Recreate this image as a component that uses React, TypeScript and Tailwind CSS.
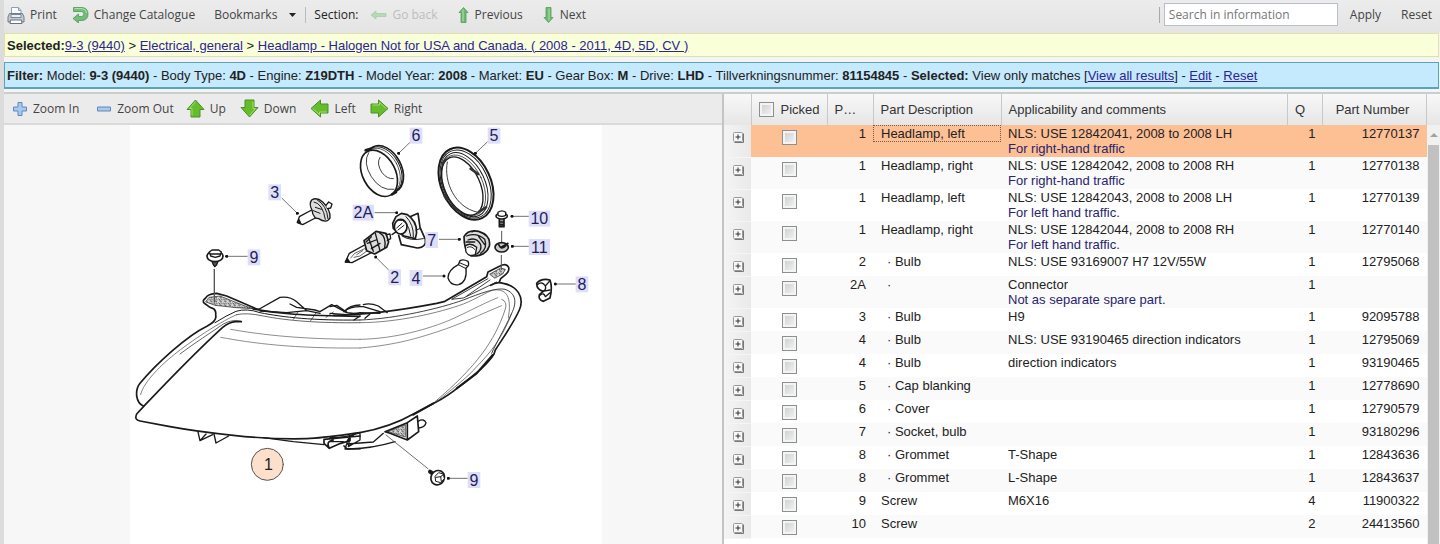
import { Fragment, type ReactNode } from "react";

type Part = {
  pos: string;
  description: string;
  comment?: string;
  note?: string;
  qty: string;
  number?: string;
  child?: boolean;
};

const parts: Part[] = [
  { pos: "1", description: "Headlamp, left", comment: "NLS: USE 12842041, 2008 to 2008 LH", note: "For right-hand traffic", qty: "1", number: "12770137" },
  { pos: "1", description: "Headlamp, right", comment: "NLS: USE 12842042, 2008 to 2008 RH", note: "For right-hand traffic", qty: "1", number: "12770138" },
  { pos: "1", description: "Headlamp, left", comment: "NLS: USE 12842043, 2008 to 2008 LH", note: "For left hand traffic.", qty: "1", number: "12770139" },
  { pos: "1", description: "Headlamp, right", comment: "NLS: USE 12842044, 2008 to 2008 RH", note: "For left hand traffic.", qty: "1", number: "12770140" },
  { pos: "2", description: "Bulb", comment: "NLS: USE 93169007 H7 12V/55W", qty: "1", number: "12795068", child: true },
  { pos: "2A", description: "", comment: "Connector", note: "Not as separate spare part.", qty: "1", child: true },
  { pos: "3", description: "Bulb", comment: "H9", qty: "1", number: "92095788", child: true },
  { pos: "4", description: "Bulb", comment: "NLS: USE 93190465 direction indicators", qty: "1", number: "12795069", child: true },
  { pos: "4", description: "Bulb", comment: "direction indicators", qty: "1", number: "93190465", child: true },
  { pos: "5", description: "Cap blanking", qty: "1", number: "12778690", child: true },
  { pos: "6", description: "Cover", qty: "1", number: "12790579", child: true },
  { pos: "7", description: "Socket, bulb", qty: "1", number: "93180296", child: true },
  { pos: "8", description: "Grommet", comment: "T-Shape", qty: "1", number: "12843636", child: true },
  { pos: "8", description: "Grommet", comment: "L-Shape", qty: "1", number: "12843637", child: true },
  { pos: "9", description: "Screw", comment: "M6X16", qty: "4", number: "11900322" },
  { pos: "10", description: "Screw", qty: "2", number: "24413560" },
];

const filters = [
  ["Model", "9-3 (9440)"],
  ["Body Type", "4D"],
  ["Engine", "Z19DTH"],
  ["Model Year", "2008"],
  ["Market", "EU"],
  ["Gear Box", "M"],
  ["Drive", "LHD"],
  ["Tillverkningsnummer", "81154845"],
];

export default function App() {
  return (
    <div className="flex h-screen flex-col overflow-hidden border-l-4 border-[#dcdcdc] bg-[#f4f4f4] font-['Liberation_Sans',Arial,sans-serif] text-[13px] leading-[15px] text-[#222]">
      <MainToolbar />

      {/* Breadcrumb */}
      <nav className="mr-px flex h-6 shrink-0 items-center border border-[#e3dfae] bg-[#f9ffd9] px-0.5 whitespace-pre">
        <b>Selected:</b>
        <Link>9-3 (9440)</Link>
        {" > "}
        <Link>Electrical, general</Link>
        {" > "}
        <Link>Headlamp - Halogen Not for USA and Canada. ( 2008 - 2011, 4D, 5D, CV )</Link>
      </nav>

      {/* Filter */}
      <div className="mt-[5px] mr-px flex h-[27px] shrink-0 items-center border border-b-2 border-[#5ba4b8] bg-[#c5e9fd] px-0.5 whitespace-pre">
        <b>Filter: </b>
        {filters.map(([label, value]) => (
          <Fragment key={label}>
            {label}: <b>{value}</b>
            {" - "}
          </Fragment>
        ))}
        <b>Selected:</b>
        {" View only matches ["}
        <Link>View all results</Link>
        {"] - "}
        <Link>Edit</Link>
        {" - "}
        <Link>Reset</Link>
      </div>

      <div className="mt-[3px] flex min-h-0 flex-1 border-t-2 border-[#c9cfca]">
        <main className="flex min-w-0 flex-1 flex-col">
          <DiagramToolbar />
          <div className="flex min-h-0 flex-1 justify-center bg-[#f7f7f7] pl-1.5">
            <Diagram />
          </div>
        </main>
        <PartsTable />
      </div>
    </div>
  );
}

function Link({ children }: { children: ReactNode }) {
  return (
    <a href="#" className="text-[#2b2594] underline">
      {children}
    </a>
  );
}

function ToolButton({ icon, children, disabled }: { icon?: ReactNode; children: ReactNode; disabled?: boolean }) {
  return (
    <button type="button" disabled={disabled} className="flex items-center gap-[5px] whitespace-nowrap disabled:text-[#bdbdbd]">
      {icon}
      {children}
    </button>
  );
}

function MainToolbar() {
  return (
    <header className="flex h-[33px] shrink-0 items-center bg-linear-to-b from-[#ececec] to-[#e4e4e4] pr-2 pb-1 pl-[3px] font-['Open_Sans',Tahoma,sans-serif] text-xs text-[#444]">
      <div className="flex flex-1 items-center gap-[19px]">
        <div className="flex items-center gap-[15px]">
          <ToolButton icon={<PrintIcon />}>Print</ToolButton>
          <ToolButton icon={<SwapIcon />}>Change Catalogue</ToolButton>
        </div>
        <button type="button" className="flex items-center gap-3">
          Bookmarks
          <svg className="h-1 w-[7px]" viewBox="0 0 7 4">
            <path d="M0 0h7L3.500 4z" fill="#222" />
          </svg>
        </button>
        <div className="-ml-2.5 flex items-center gap-3">
          <span className="h-4 w-px bg-[#bbb]" />
          <span className="-ml-1 text-[#222]">Section:</span>
          <ToolButton disabled icon={<BackIcon />}>Go back</ToolButton>
        </div>
        <ToolButton icon={<StepIcon />}>Previous</ToolButton>
        <ToolButton icon={<StepIcon className="rotate-180" />}>Next</ToolButton>
      </div>
      <form className="flex items-center">
        <span className="mr-1 h-4 w-px bg-[#aaa]" />
        <input
          type="text"
          aria-label="Search in information"
          placeholder="Search in information"
          className="h-[23px] w-[174px] border border-[#b9bfc9] bg-white px-1 placeholder:text-[#777]"
        />
        <button type="button" className="ml-3">Apply</button>
        <button type="reset" className="ml-5">Reset</button>
      </form>
    </header>
  );
}

function DiagramToolbar() {
  return (
    <div className="flex h-[31px] shrink-0 items-center gap-3 border-b-2 border-[#dadada] bg-[#ebebeb] pl-2 font-['Open_Sans',Tahoma,sans-serif] text-xs text-[#444]">
      <div className="flex items-center gap-[17px]">
        <ToolButton icon={<PlusIcon />}>Zoom In</ToolButton>
        <ToolButton icon={<MinusIcon />}>Zoom Out</ToolButton>
      </div>
      <div className="flex items-center gap-3.5">
        <ToolButton icon={<ArrowIcon />}>Up</ToolButton>
        <ToolButton icon={<ArrowIcon className="rotate-180" />}>Down</ToolButton>
        <ToolButton icon={<ArrowIcon className="-rotate-90" />}>Left</ToolButton>
        <ToolButton icon={<ArrowIcon className="rotate-90" />}>Right</ToolButton>
      </div>
    </div>
  );
}

function PartsTable() {
  return (
    <section className="flex w-1/2 border-l-2 border-[#c4c4c4] bg-white">
      <div className="min-w-0 flex-1 overflow-hidden">
        <table className="w-full table-fixed border-collapse">
          <colgroup>
            <col className="w-[27px]" />
            <col className="w-[76px]" />
            <col className="w-[46px]" />
            <col className="w-32" />
            <col />
            <col className="w-[35px]" />
            <col className="w-[104px]" />
          </colgroup>
          <thead>
            <tr className="h-[31px] bg-linear-to-b from-[#f8f8f8] to-[#e6e6e6] text-left text-[#333] *:border-r *:border-[#c8c8c8] *:font-normal">
              <th />
              <th className="pl-[7px]">
                <label className="flex items-center gap-[7px]">
                  <Check />
                  Picked
                </label>
              </th>
              <th className="pl-[7px]">P…</th>
              <th className="pl-[7px]">Part Description</th>
              <th className="pl-[7px]">Applicability and comments</th>
              <th className="pl-[7px]">Q</th>
              <th className="pr-1 text-center">Part Number</th>
            </tr>
          </thead>
          <tbody>
            {parts.map((part, index) => (
              <PartRow key={index} part={part} index={index} />
            ))}
          </tbody>
        </table>
      </div>
      <Scrollbar />
    </section>
  );
}

function PartRow({ part, index }: { part: Part; index: number }) {
  const selected = index === 0;
  const background = selected ? "bg-[#fdbf94]" : index % 2 ? "bg-[#fafafa]" : "bg-white";

  return (
    <tr className={`align-top ${part.note ? "h-8" : "h-[23px]"} ${background}`}>
      <td className="border-b border-[#f5f5f5] bg-linear-to-r from-[#f4f4f4] to-[#e9e9e9] pt-[7px] pl-[9px]">
        <button type="button" aria-label="Expand row" className="block">
          <ExpandIcon />
        </button>
      </td>
      <td className="pt-[5px] pl-[31px]">
        <Check label={`Pick ${part.number ?? part.pos}`} />
      </td>
      <td className="pt-px pr-[7px] text-right">{part.pos}</td>
      <td>
        <div className={`h-[17px] border pl-[7px] ${selected ? "border-dotted border-[#7a5a45]" : "border-transparent"}`}>
          {part.child ? <span className="pl-1.5">· {part.description}</span> : part.description}
        </div>
      </td>
      <td className="pt-px pl-[7px] whitespace-nowrap">
        {part.comment}
        {part.note && <div className="text-[#28246e]">{part.note}</div>}
      </td>
      <td className="pt-px pr-[7px] text-right">{part.qty}</td>
      <td className="pt-px pr-[7px] text-right">{part.number}</td>
    </tr>
  );
}

function Check({ label }: { label?: string }) {
  return (
    <input
      type="checkbox"
      aria-label={label}
      className="block size-[15px] appearance-none border border-[#8e8f8f] bg-linear-to-br from-[#c9cccf] to-[#f6f6f6] shadow-[inset_0_0_0_2px_#f4f4f4]"
    />
  );
}

function Scrollbar() {
  return (
    <div className="flex w-[13px] flex-col items-center bg-[#f1f1f1]">
      <div className="h-[31px] w-full bg-linear-to-b from-[#f8f8f8] to-[#e6e6e6]" />
      <svg className="my-2 h-1 w-2 shrink-0" viewBox="0 0 8 4">
        <path d="M0 4h8L4 0z" fill="#a3a3a3" />
      </svg>
      <div className="w-[11px] flex-1 bg-[#c1c1c1]" />
    </div>
  );
}

/* Icons */

function ExpandIcon() {
  return (
    <svg className="size-[11px]" viewBox="0 0 11 11">
      <rect x=".5" y=".5" width="9" height="9" rx="1" fill="#f7f7f7" stroke="#999" />
      <path d="M10.500 1.500v9h-9" fill="none" stroke="#777" />
      <path d="M5 2.500v5M2.500 5h5" stroke="#333" />
    </svg>
  );
}

function PrintIcon() {
  return (
    <svg className="size-[18px]" viewBox="0 0 18 18">
      <path d="M4.500 8V1.500h7l2.500 3V8" fill="#fafcff" stroke="#8ba0bd" />
      <path d="M11.500 1.500v3H14" fill="none" stroke="#8ba0bd" />
      <path d="M2.500 7.500h13L17 11v5H1v-5z" fill="#c6cad1" stroke="#747c88" />
      <path d="M4 8.500h10v3H4z" fill="#e9f1fb" stroke="#7b8798" />
      <path d="M3.500 14h11l.5 3.500H3z" fill="#fff" stroke="#68717d" />
    </svg>
  );
}

function SwapIcon() {
  return (
    <svg className="size-[17px]" viewBox="0 0 17 17">
      <path d="M1.500 1.500H10Q16 2 16 8t-6 6.500H6.500V17L1 12.500 6.500 8v2.500H9.500Q12 10 12 8T9.500 5.500h-8z" fill="#72bd78" stroke="#4b9a56" strokeWidth=".8" />
      <path d="M2.500 2.600H10Q14 3 14.800 7" fill="none" stroke="#b5e0b5" />
    </svg>
  );
}

function BackIcon() {
  return (
    <svg className="h-[10px] w-[17px]" viewBox="0 0 17 10">
      <path d="M1 5l5-4v2.500h10v3H6V9z" fill="#b7d9b5" stroke="#a2c9a2" strokeWidth=".7" />
    </svg>
  );
}

function StepIcon({ className = "" }: { className?: string }) {
  return (
    <svg className={`h-4 w-[13px] ${className}`} viewBox="0 0 13 16">
      <path d="M6.500.500l4.500 5H9v10H4v-10H2z" fill="#6fb873" stroke="#559a5a" strokeWidth=".8" />
      <path d="M6 2.500v12" stroke="#b4dfb0" />
    </svg>
  );
}

function PlusIcon() {
  return (
    <svg className="size-4" viewBox="0 0 16 16">
      <path d="M6 1.500h4V6h4.500v4H10v4.500H6V10H1.500V6H6z" fill="#a8c9ec" stroke="#5d88be" />
    </svg>
  );
}

function MinusIcon() {
  return (
    <svg className="size-4" viewBox="0 0 16 16">
      <path d="M1.500 6h13v4h-13z" fill="#a8c9ec" stroke="#5d88be" />
    </svg>
  );
}

function ArrowIcon({ className = "" }: { className?: string }) {
  return (
    <svg className={`size-[19px] ${className}`} viewBox="0 0 19 19">
      <path d="M9.500 1l8.500 9.500h-4V18H5v-7.500H1z" fill="#66bd2c" stroke="#4b8f28" />
      <path d="M9.500 2.700L3.500 9.500H6v7" fill="none" stroke="#a4de72" />
    </svg>
  );
}

/* Exploded view of the headlamp, drawn at three units per pixel */

const callouts = [
  { label: "6", x: 1248, y: 407, line: "M1231 426L1196 460" },
  { label: "5", x: 1482, y: 407, line: "M1462 426L1426 460" },
  { label: "3", x: 824, y: 577, line: "M846 595L892 640" },
  { label: "2A", x: 1090, y: 638, line: "M1125 638H1190" },
  { label: "7", x: 1295, y: 720, line: "M1318 718H1378" },
  { label: "10", x: 1618, y: 656, line: "M1588 649H1536" },
  { label: "11", x: 1618, y: 741, line: "M1588 739H1537" },
  { label: "2", x: 1184, y: 832, line: "M1166 810L1127 771" },
  { label: "4", x: 1248, y: 834, line: "M1270 828H1332" },
  { label: "8", x: 1746, y: 853, line: "M1727 852H1666" },
  { label: "9", x: 762, y: 772, line: "M742 769H680" },
  { label: "9", x: 1422, y: 1440, line: "M1402 1435H1345" },
];

function Diagram() {
  return (
    <svg className="h-[419px] w-[472px] shrink-0 bg-white" viewBox="390 375 1416 1257" fill="none" stroke="#1a1a1a" strokeWidth="4" strokeLinejoin="round" strokeLinecap="round">
      <defs>
        <marker id="dot" viewBox="0 0 10 10" refX="5" refY="5" markerWidth="10" markerHeight="10" markerUnits="userSpaceOnUse">
          <circle cx="5" cy="5" r="4.500" fill="#111" stroke="none" />
        </marker>
        <pattern id="speckle" width="14" height="12" patternUnits="userSpaceOnUse">
          <rect width="14" height="12" fill="#ddd" stroke="none" />
          <path d="M2 3l4 3M9 2l3 4M5 9l5 1" stroke="#333" strokeWidth="2.500" />
        </pattern>
      </defs>

      <Housing />
      <Bulbs />
      <Rings />
      <Hardware />

      {callouts.map((c, i) => (
        <g key={i}>
          <path d={c.line} stroke="#555" strokeWidth="2.500" markerEnd="url(#dot)" />
          <rect x={c.x - (c.label.length > 1 ? 32 : 19)} y={c.y - 24} width={c.label.length > 1 ? 64 : 38} height="48" fill="#dedef8" stroke="none" />
          <text x={c.x} y={c.y + 17} textAnchor="middle" fontSize="48" fill="#211d5c" stroke="none">
            {c.label}
          </text>
        </g>
      ))}

      <circle cx="802" cy="1393" r="48" fill="#fde0cb" stroke="#555" strokeWidth="3" />
      <text x="805" y="1410" textAnchor="middle" fontSize="48" fill="#222" stroke="none">
        1
      </text>
    </svg>
  );
}

function Housing() {
  return (
    <>
      <g transform="translate(360 810)">
        <path d="M410 117L320 78 290 70Q262 72 257 84 246 92 252 99L270 112Q290 116 287 135 292 152 262 168C200 198 110 280 60 340Q48 355 50 378 54 402 70 408" strokeWidth="5" />
        <path d="M268 82L300 78 375 108 400 116 350 113 285 106 258 96Z" fill="url(#speckle)" strokeWidth="2" />
        <path d="M285 158Q320 136 348 124 380 114 420 128C490 142 580 152 720 150" strokeWidth="3" />
        <path d="M350 134C290 160 190 230 155 260 100 305 66 350 62 374 62 392 76 404M340 127C270 160 180 225 148 252 95 298 60 345 56 374 56 392 72 406" strokeWidth="2" stroke="#444" />
        <path d="M350 134Q380 127 430 138C500 152 600 160 720 158" strokeWidth="2" />
        <path d="M364 155H347C330 156 318 164 308 172 250 225 170 305 76 404L50 432Q42 450 60 453L150 470C210 481 270 489 340 496 430 506 480 508 560 506 610 504 660 496 720 488" strokeWidth="5" />
        <path d="M364 154Q340 146 310 162C270 190 225 218 180 252" strokeWidth="2" />
        <path d="M332 178C400 190 520 208 720 208M302 202C400 220 520 236 720 234" strokeWidth="2" stroke="#555" />
        {/* Rear reflector shapes */}
        <path d="M400 118L418 117 480 82Q510 78 530 95L558 120M510 102L530 112 585 120 600 125 635 104 680 128M672 125Q690 105 720 105M420 123L500 128 560 122 600 130" />
        <path d="M400 117C480 132 540 137 720 139" strokeWidth="5" />
        <path d="M535 124L520 148M590 126L572 152M640 126L618 142" strokeWidth="2" />
        {/* Lower brackets */}
        <path d="M234 486L240 512 278 494M282 492L288 519 326 498M240 512L258 492M430 503L520 515 612 524" />
        <path d="M612 508V520L628 535 662 520 690 512V500M612 508L720 498M628 535Q616 514 640 510M672 528L682 537 720 536M682 520Q680 505 700 494" strokeWidth="5" />
      </g>
      <g transform="translate(990 780)">
        <path d="M90 518C160 505 205 488 250 462L320 425C350 410 365 398 385 382 435 345 478 305 492 282L496 270C525 225 550 190 568 150 585 110 560 78 520 70Q500 64 482 76" strokeWidth="5" />
        <path d="M10 166C90 165 200 153 320 130L345 124 470 50 474 36 510 18Q528 8 536 22 539 34 524 46L512 56 508 66" strokeWidth="5" />
        <path d="M90 180C200 176 330 145 400 120 450 100 500 82 525 88 560 100 560 130 545 160 520 215 500 245 485 280" strokeWidth="2.500" />
        <path d="M90 188C200 188 330 158 400 132 440 116 470 96 490 90 530 86 540 110 538 150L535 174" strokeWidth="2" stroke="#444" />
        <path d="M480 42L512 24 526 28 518 42 495 54Z" fill="url(#speckle)" strokeWidth="2" />
        <path d="M474 56L365 118 400 114 500 66M410 108L480 60" strokeWidth="2.500" />
        <path d="M90 238C200 236 300 205 360 180 410 158 450 135 503 113M90 264C200 255 270 232 320 216 400 190 450 163 515 137" strokeWidth="2" stroke="#555" />
        <path d="M515 118Q534 124 525 150C495 240 440 320 315 425M545 160C520 230 480 280 440 320 420 345 370 385 320 425" strokeWidth="2" stroke="#444" />
        <path d="M250 464L310 430M380 385L440 340 488 285" strokeWidth="6" />
        <path d="M0 140L20 136 52 158 85 162M42 155Q60 138 100 140L150 155M100 134Q120 128 145 138L172 158M0 160L50 164 90 158 150 160M90 168L72 180M120 162L105 175" />
        <path d="M0 533C40 533 65 528 90 518M0 545H40M60 528L55 560 90 540V522M45 567Q120 568 195 545M45 567L50 552 130 546 160 520" />
        <path d="M165 515L232 488 262 468 266 515 232 540 180 520ZM232 490V540" fill="#fff" strokeWidth="5" />
        <path d="M175 514L226 494V530Z" fill="url(#speckle)" strokeWidth="2" />
        <path d="M264 484Q282 474 288 488 286 502 266 504" />
        <path d="M168 525L294 626" stroke="#555" strokeWidth="2.500" />
      </g>
    </>
  );
}

function Bulbs() {
  return (
    <>
      {/* 3 */}
      <g transform="translate(390 360)">
        <path d="M545 270L508 290 502 308 518 314 556 294" />
        <path d="M502 306L508 300 512 311Z" fill="#111" />
        <path d="M545 240Q560 230 578 246 602 268 600 294 590 312 566 296L556 294Q546 282 546 270 536 252 545 240Z" fill="#ddd" />
        <path d="M552 246Q578 250 586 298M562 240Q590 256 594 296M556 262L574 268M550 272L570 280" strokeWidth="3" />
        <path d="M588 256L596 246 606 252 602 264 592 266" fill="#fff" />
      </g>
      <g transform="translate(990 360)">
        {/* 2 */}
        <path d="M120 366L58 400 46 426 66 428 128 396Z" fill="#fff" />
        <path d="M62 414L74 400 104 386 112 392 90 408 72 412M80 404L98 392" strokeWidth="2" />
        <path d="M46 426L52 416 58 425Z" fill="#111" />
        <path d="M102 362L138 334 168 340 176 366 170 382 134 402 110 392Z" fill="#ddd" strokeWidth="5" />
        <path d="M116 354L130 394M136 340L150 392M148 338Q170 350 164 384M112 370L138 360M124 386L150 370M108 366L124 350" strokeWidth="4" />
        <path d="M168 344L180 342 182 356 172 362M186 344L212 326" />
        {/* 2A */}
        <path d="M240 290L264 280 270 322 286 358Q290 382 262 384L214 374 206 346" fill="#fff" strokeWidth="5" />
        <path d="M214 280L232 284 242 292Q268 318 256 356L222 348 190 326 188 310 198 290Z" fill="#eee" strokeWidth="5" />
        <ellipse cx="212" cy="320" rx="19" ry="22" fill="#fff" strokeWidth="5" />
        <path d="M206 300Q234 296 242 348M228 290Q252 314 250 350M204 330L222 316M200 324L216 310M258 330L270 326M216 348Q240 364 280 356" strokeWidth="3" />
        {/* 4 */}
        <path d="M385 434Q354 450 354 474 362 498 386 494 412 486 408 444 420 436 414 424 400 416 390 422Z" fill="#fff" />
        <path d="M385 434L408 446M388 428L412 438" strokeWidth="3" />
        {/* 7 */}
        <path d="M402 350Q414 328 446 334 484 346 478 378 468 410 424 408 402 396 402 350Z" fill="#ddd" strokeWidth="5" />
        <path d="M410 348Q440 336 464 358 474 384 452 400M414 360Q440 350 452 374 456 392 440 402M408 366H434M446 350L464 374M426 336L434 332" strokeWidth="4" />
        <path d="M406 378Q420 366 440 382L436 404Q418 412 408 396Z" fill="#fff" />
        <path d="M412 382Q424 376 434 388" strokeWidth="3" />
      </g>
    </>
  );
}

function Rings() {
  return (
    <g transform="translate(990 360)">
      {/* 6 */}
      <ellipse cx="164" cy="147" rx="50" ry="75" transform="rotate(-28 164 147)" fill="#fff" strokeWidth="5" />
      <ellipse cx="160" cy="150" rx="50" ry="74" transform="rotate(-28 160 150)" strokeWidth="3" />
      <ellipse cx="156" cy="153" rx="49" ry="73" transform="rotate(-28 156 153)" strokeWidth="2" />
      <ellipse cx="147" cy="160" rx="49" ry="74" transform="rotate(-28 147 160)" fill="#fff" strokeWidth="5" />
      <path d="M116 98Q98 128 124 170 152 214 192 208M150 112Q138 130 156 158 172 178 190 176" strokeWidth="2.500" />
      <path d="M107 91L122 86M186 223L198 216" strokeWidth="8" />
      {/* 5 */}
      <ellipse cx="408" cy="191" rx="74" ry="114" transform="rotate(-25 408 191)" fill="#fff" strokeWidth="6" />
      <ellipse cx="407" cy="192" rx="68" ry="108" transform="rotate(-25 407 192)" strokeWidth="3" />
      <ellipse cx="404" cy="194" rx="61" ry="102" transform="rotate(-25 404 194)" strokeWidth="3" />
      <ellipse cx="401" cy="196" rx="57" ry="97" transform="rotate(-25 401 196)" strokeWidth="2" />
      <ellipse cx="397" cy="198" rx="53" ry="93" transform="rotate(-25 397 198)" fill="#fff" />
      <path d="M352 126C340 186 376 262 440 276" strokeWidth="2.500" />
      <path d="M338 130L346 120M422 146L444 162M446 276L468 262M344 228L350 238M370 260L380 268" strokeWidth="8" stroke="#333" />
    </g>
  );
}

function Hardware() {
  return (
    <>
      {/* 9, upper */}
      <g transform="translate(390 360)">
        <path d="M246 424L250 434 254 440 260 434 264 424" fill="#555" />
        <ellipse cx="255" cy="409" rx="24" ry="16" fill="#fff" strokeWidth="5" />
        <path d="M238 396L246 390H266L274 396 270 408 256 412 242 408ZM240 402H272" fill="#fff" />
        <path d="M253 448V546" stroke="#555" />
      </g>
      <g transform="translate(990 360)">
        {/* 10 */}
        <path d="M508 296V320H522V296M508 306H522M508 314H522" fill="#999" strokeWidth="5" />
        <ellipse cx="515" cy="288" rx="17" ry="9" fill="#fff" strokeWidth="5" />
        <path d="M504 286V277Q515 268 527 277V286Q516 292 504 286Z" fill="#fff" />
        <path d="M515 334V366M514 406V448" stroke="#555" strokeWidth="3" />
        {/* 11 */}
        <ellipse cx="515" cy="382" rx="20" ry="14" fill="#ccc" strokeWidth="5" />
        <path d="M506 374Q514 392 528 376M516 380L534 370" strokeWidth="5" />
        {/* 8 */}
        <path d="M620 490Q634 474 660 480 668 502 660 534L640 544Q624 540 628 524L640 514Q620 510 620 490Z" fill="#fff" strokeWidth="5" />
        <path d="M622 494Q636 482 646 498 650 510 638 514L660 510M630 526Q642 516 646 530L660 518M646 498L660 482" />
      </g>
      {/* 9, lower */}
      <g transform="translate(990 780)">
        <path d="M300 635L312 644" strokeWidth="12" />
        <ellipse cx="323" cy="653" rx="20" ry="22" transform="rotate(30 323 653)" fill="#fff" strokeWidth="5" />
        <path d="M316 648L326 638 340 642 343 656 332 668 318 664ZM318 652L332 650 342 642M332 650L334 664" fill="#fff" strokeWidth="3" />
      </g>
    </>
  );
}
